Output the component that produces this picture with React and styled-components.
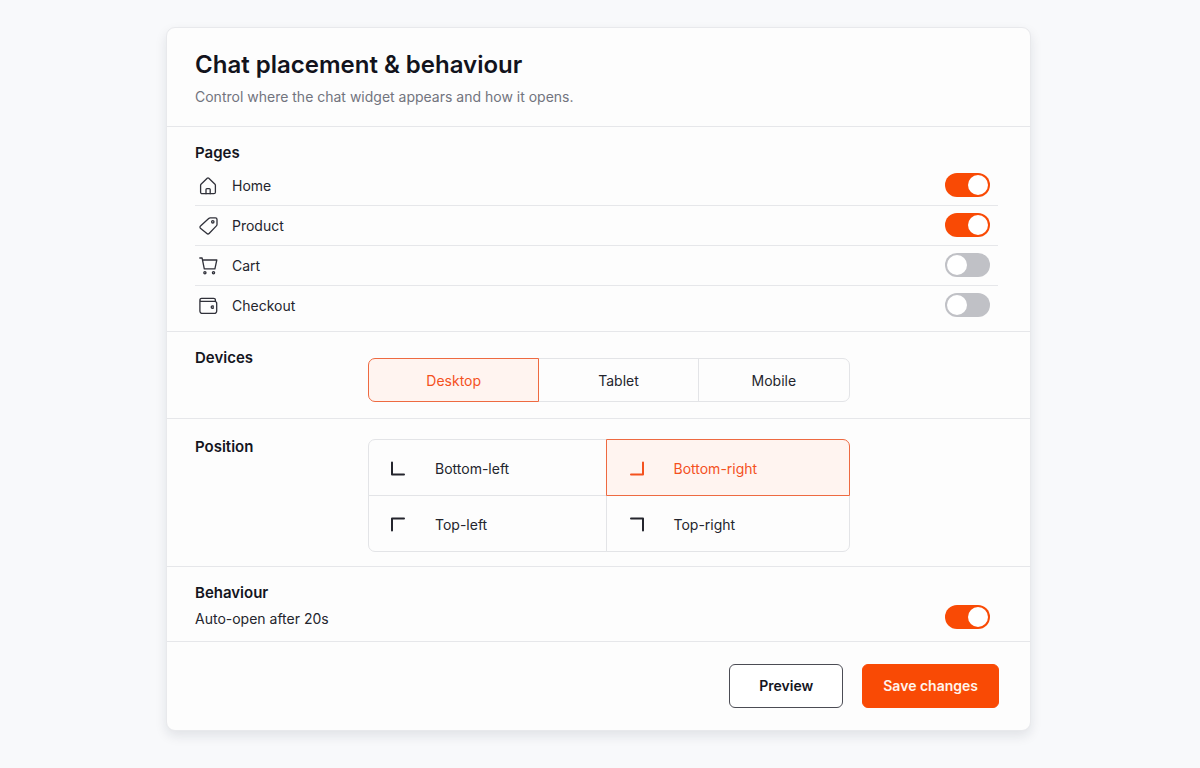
import React, { useState } from "react";
import styled, { createGlobalStyle } from "styled-components";

const GlobalStyle = createGlobalStyle`
  *, *::before, *::after { box-sizing: border-box; }
  body {
    margin: 0;
    background: #f8f9fb;
    color: #24252d;
    font-family: Inter, "Liberation Sans", sans-serif;
    font-size: 14px;
    line-height: 24px;
  }
`;

const Page = styled.main`
  padding: 27px 27px 38px 24px;
`;

const Card = styled.form`
  max-width: 865px;
  margin: 0 auto;
  background: #fdfdfd;
  border: 1px solid #e8e9ec;
  border-radius: 9px;
  box-shadow: 0 5px 12px rgba(24, 28, 45, 0.1);
`;

const Header = styled.header`
  padding: 21px 28px 17px;
  border-bottom: 1px solid #e6e7ea;
`;

const Title = styled.h1`
  margin: 0 0 4px;
  font-size: 24px;
  font-weight: 600;
  line-height: 32px;
  color: #12131c;
`;

const Subtitle = styled.p`
  margin: 0;
  color: #72747e;
`;

const Section = styled.section`
  display: ${(p) => (p.$split ? "grid" : "block")};
  grid-template-columns: 173px minmax(0, 482px);
  padding: ${(p) => p.$pad};
  border-bottom: 1px solid #e6e7ea;
`;

const Heading = styled.h2`
  margin: 0;
  font-size: 15px;
  font-weight: 600;
  line-height: 24px;
  color: #14151e;
`;

const PageList = styled.ul`
  margin: 1px 0 0;
  padding: 0;
  list-style: none;
`;

const PageRow = styled.li`
  height: 40px;
  border-bottom: 1px solid #e6e7ea;
  &:last-child { border-bottom: 0; }
`;

const ToggleLabel = styled.label`
  display: flex;
  align-items: flex-start;
  padding: 7px 8px 6px 4px;
  cursor: pointer;
`;

const PageName = styled.span`
  display: flex;
  align-items: center;
  gap: 13px;
  height: 26px;
`;

const RowIcon = styled.svg`
  width: 20px;
  height: 20px;
  fill: none;
  stroke: #30313a;
  stroke-width: 1.3;
  stroke-linecap: round;
  stroke-linejoin: round;
`;

const Switch = styled.input`
  appearance: none;
  flex: none;
  width: 45px;
  height: 24px;
  margin: 0 0 0 auto;
  padding: 2px;
  border-radius: 12px;
  background: #c0c1c6;
  cursor: pointer;
  &::before {
    content: "";
    display: block;
    width: 20px;
    height: 20px;
    border-radius: 50%;
    background: #ffffff;
  }
  &:checked { background: #f94a05; }
  &:checked::before { margin-left: auto; }
`;

const Options = styled.div`
  display: grid;
  grid-template-columns: ${(p) => p.$columns};
  grid-template-rows: ${(p) => p.$rows};
  margin-top: ${(p) => p.$top};
  padding: 0 1px 1px 0;
`;

const Option = styled.label`
  display: flex;
  align-items: center;
  justify-content: ${(p) => (p.$corner ? "flex-start" : "center")};
  gap: 28px;
  margin: 0 -1px -1px 0;
  padding: ${(p) => (p.$corner ? "2px 22px 0" : "2px 0 0")};
  border: 1px solid #e3e4e7;
  border-radius: ${(p) => p.$radius || "0"};
  cursor: pointer;
  &:has(input:checked) {
    z-index: 1;
    color: #f4511e;
    background: #fff4f0;
    border-color: #ee6a41;
  }
`;

const HiddenRadio = styled.input`
  appearance: none;
  width: 0;
  height: 0;
  margin: 0 -28px 0 0;
`;

const CornerIcon = styled.svg`
  width: 16px;
  height: 16px;
  fill: none;
  stroke: currentColor;
  stroke-width: 2;
  stroke-linecap: round;
  stroke-linejoin: round;
`;

const BehaviourRow = styled.div`
  display: flex;
  align-items: flex-start;
  padding-right: 8px;
`;

const BehaviourText = styled.label`
  line-height: 28px;
`;

const Footer = styled.footer`
  display: flex;
  justify-content: flex-end;
  gap: 19px;
  padding: 22px 31px;
`;

const Button = styled.button`
  height: 44px;
  padding: 0 ${(p) => (p.$primary ? "20px" : "29px")};
  font: inherit;
  font-weight: 600;
  border-radius: 6px;
  border: 1px solid ${(p) => (p.$primary ? "#f94a05" : "#4b4c54")};
  color: ${(p) => (p.$primary ? "#fff4ec" : "#14151e")};
  background: ${(p) => (p.$primary ? "#f94a05" : "#ffffff")};
  cursor: pointer;
`;

const icons = {
  Home: (
    <>
      <path d="M2 8.2 8.2 2.3a1.2 1.2 0 0 1 1.6 0L16 8.2a1.4 1.4 0 0 1 .4 1V16.2a1.5 1.5 0 0 1-1.5 1.5H3.1a1.5 1.5 0 0 1-1.5-1.5V9.2a1.4 1.4 0 0 1 .4-1z" />
      <path d="M7 17.7v-4.1a.9.9 0 0 1 .9-.9h2.4a.9.9 0 0 1 .9.9v4.1" />
    </>
  ),
  Product: (
    <>
      <path d="M11.2 1.8h5.2a1.6 1.6 0 0 1 1.6 1.6v5.1a2 2 0 0 1-.6 1.4l-7.3 7.6a1.5 1.5 0 0 1-2.2 0L1.4 12.2a1.5 1.5 0 0 1 .1-2.2l8.2-7.6a2.2 2.2 0 0 1 1.5-.6z" />
      <circle cx="13.8" cy="5.8" r="1.2" />
    </>
  ),
  Cart: (
    <>
      <path d="M.8 2h2.3l2.2 10.8h10.6L17.8 4H3.6" />
      <circle cx="5.9" cy="16.8" r="1.1" />
      <circle cx="14.5" cy="16.8" r="1.1" />
    </>
  ),
  Checkout: (
    <>
      <path d="M.9 4.4V15a2.4 2.4 0 0 0 2.4 2.4h12a2.4 2.4 0 0 0 2.4-2.4V7.4a2 2 0 0 0-2-2H2.4a1.5 1.5 0 0 1-1.5-1.5 1.7 1.7 0 0 1 1.7-1.6h12a1.8 1.8 0 0 1 1.8 1.8v1.4" />
      <path d="M14.2 9.9h-.8a1.2 1.2 0 0 0 0 2.4h.8z" />
    </>
  ),
};

const devices = [
  { name: "Desktop", radius: "7px 0 0 7px" },
  { name: "Tablet" },
  { name: "Mobile", radius: "0 7px 7px 0" },
];

const positions = [
  { name: "Bottom-left", radius: "7px 0 0 0", path: "M1 1.5v12h12" },
  { name: "Bottom-right", radius: "0 7px 0 0", path: "M14 1.5v12H2" },
  { name: "Top-left", radius: "0 0 0 7px", path: "M1 13.5v-12h12" },
  { name: "Top-right", radius: "0 0 7px 0", path: "M14 13.5v-12H2" },
];

export default function App() {
  const [pages, setPages] = useState({ Home: true, Product: true, Cart: false, Checkout: false });
  const [device, setDevice] = useState("Desktop");
  const [position, setPosition] = useState("Bottom-right");
  const [autoOpen, setAutoOpen] = useState(true);

  return (
    <Page>
      <GlobalStyle />
      <Card onSubmit={(e) => e.preventDefault()}>
        <Header>
          <Title>Chat placement &amp; behaviour</Title>
          <Subtitle>Control where the chat widget appears and how it opens.</Subtitle>
        </Header>

        <Section $pad="14px 32px 5px 28px">
          <Heading>Pages</Heading>
          <PageList>
            {Object.keys(pages).map((name) => (
              <PageRow key={name}>
                <ToggleLabel>
                  <PageName>
                    <RowIcon viewBox="0 0 20 20" aria-hidden="true">{icons[name]}</RowIcon>
                    {name}
                  </PageName>
                  <Switch
                    type="checkbox"
                    role="switch"
                    checked={pages[name]}
                    onChange={(e) => setPages({ ...pages, [name]: e.target.checked })}
                  />
                </ToggleLabel>
              </PageRow>
            ))}
          </PageList>
        </Section>

        <Section $split $pad="14px 32px 16px 28px">
          <Heading id="devices">Devices</Heading>
          <Options role="radiogroup" aria-labelledby="devices" $columns="170fr 159fr 151fr" $rows="43px" $top="12px">
            {devices.map((d) => (
              <Option key={d.name} $radius={d.radius}>
                <HiddenRadio type="radio" name="device" checked={device === d.name} onChange={() => setDevice(d.name)} />
                {d.name}
              </Option>
            ))}
          </Options>
        </Section>

        <Section $split $pad="16px 32px 14px 28px">
          <Heading id="position">Position</Heading>
          <Options role="radiogroup" aria-labelledby="position" $columns="238fr 242fr" $rows="56px 56px" $top="4px">
            {positions.map((p) => (
              <Option key={p.name} $corner $radius={p.radius}>
                <HiddenRadio type="radio" name="position" checked={position === p.name} onChange={() => setPosition(p.name)} />
                <CornerIcon viewBox="0 0 16 16" aria-hidden="true"><path d={p.path} /></CornerIcon>
                {p.name}
              </Option>
            ))}
          </Options>
        </Section>

        <Section $pad="14px 32px 8px 28px">
          <Heading>Behaviour</Heading>
          <BehaviourRow>
            <BehaviourText htmlFor="auto-open">Auto-open after 20s</BehaviourText>
            <Switch
              id="auto-open"
              type="checkbox"
              role="switch"
              checked={autoOpen}
              onChange={(e) => setAutoOpen(e.target.checked)}
            />
          </BehaviourRow>
        </Section>

        <Footer>
          <Button type="button">Preview</Button>
          <Button type="submit" $primary>Save changes</Button>
        </Footer>
      </Card>
    </Page>
  );
}
